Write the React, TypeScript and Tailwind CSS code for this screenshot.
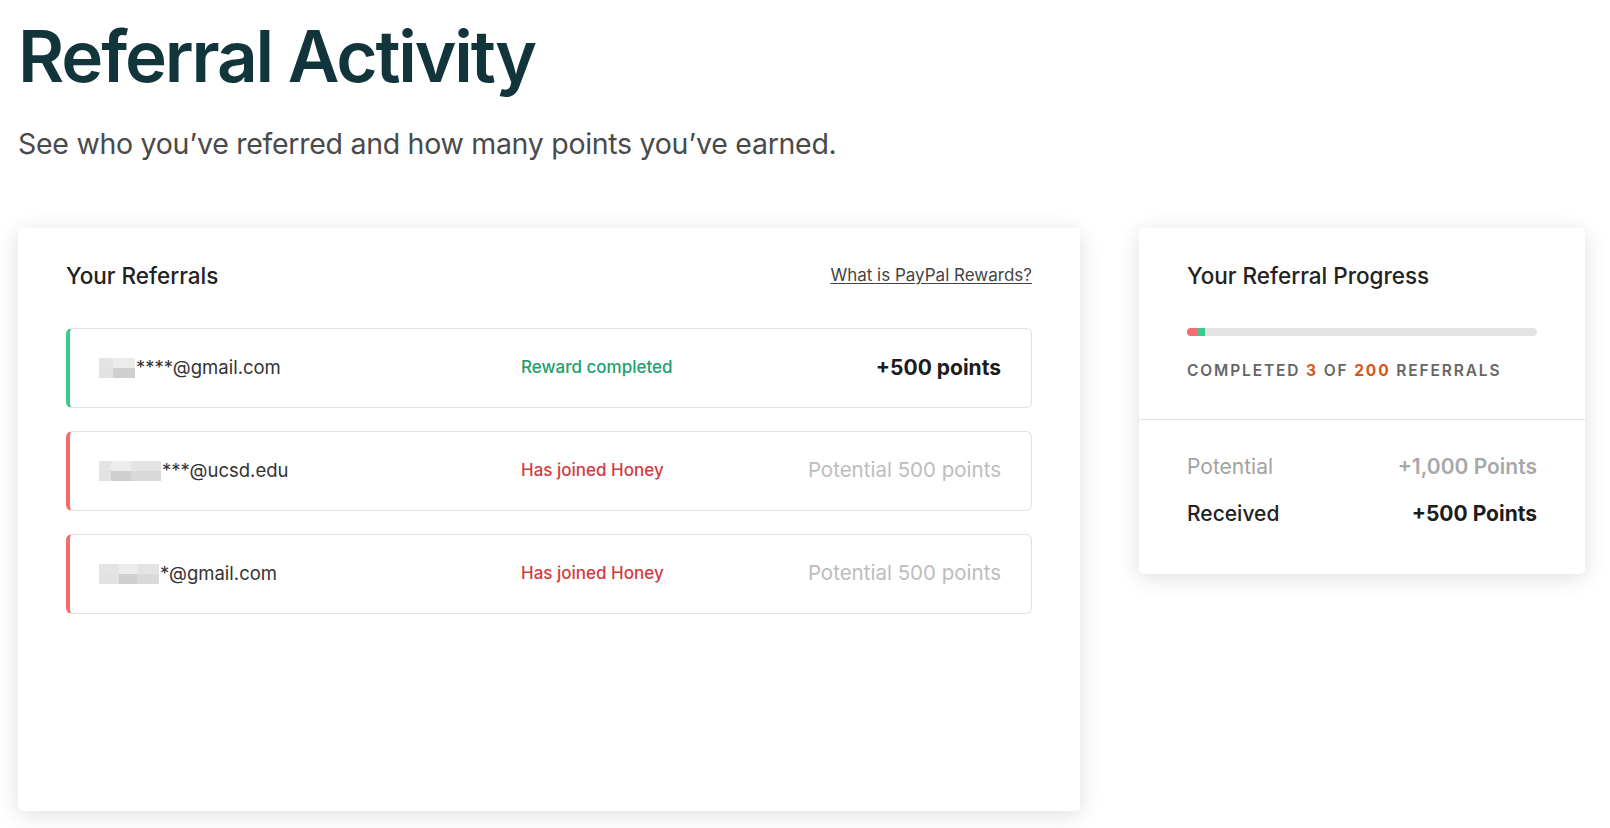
import React from 'react';

type Referral = {
  blur: number[];
  email: string;
  status: 'completed' | 'joined';
};

const referrals: Referral[] = [
  { blur: [14, 22], email: '****@gmail.com', status: 'completed' },
  { blur: [12, 20, 30], email: '***@ucsd.edu', status: 'joined' },
  { blur: [20, 18, 22], email: '*@gmail.com', status: 'joined' },
];

// pixelated stand-in for the censored part of the address
function Blur({ widths }: { widths: number[] }) {
  const shades = ['bg-[#e2e2e2]', 'bg-[#cfcfcf]', 'bg-[#d9d9d9]'];
  return (
    <span className="inline-flex flex-col h-[20px] mr-[1px]">
      <span className="flex h-[10px]">
        {widths.map((w, i) => (
          <span key={i} style={{ width: w }} className={i % 2 ? 'bg-[#ececec]' : 'bg-[#e4e4e4]'} />
        ))}
      </span>
      <span className="flex h-[10px]">
        {widths.map((w, i) => (
          <span key={i} style={{ width: w }} className={shades[i % 3]} />
        ))}
      </span>
    </span>
  );
}

function ReferralRow({ r }: { r: Referral }) {
  const done = r.status === 'completed';
  return (
    <div
      className={`flex items-center h-[80px] rounded-[6px] border border-[#e1e1e1] border-l-4 pl-[29px] pr-[30px] ${
        done ? 'border-l-[#3cc98d]' : 'border-l-[#f26d6d]'
      }`}
    >
      <div className="w-[422px] flex items-center text-[18.5px] text-[#333]">
        <Blur widths={r.blur} />
        <span>{r.email}</span>
      </div>
      <div className={`flex-1 text-[17px] font-medium ${done ? 'text-[#22a06b]' : 'text-[#d43b3f]'}`}>
        {done ? 'Reward completed' : 'Has joined Honey'}
      </div>
      {done ? (
        <div className="text-[21px] font-bold text-[#1c1c1c]">+500 points</div>
      ) : (
        <div className="text-[20.5px] text-[#bdbdbd]">Potential 500 points</div>
      )}
    </div>
  );
}

export default function App() {
  return (
    <div className="min-h-screen bg-white px-[18px] pt-[21px] font-['Inter',sans-serif]">
      <h1 className="text-[71px] font-semibold leading-[1] tracking-[-0.03em] text-[#12343b]">
        Referral Activity
      </h1>
      <p className="mt-[31px] text-[28.5px] text-[#4a4a4a] tracking-[-0.01em]">
        See who you’ve referred and how many points you’ve earned.
      </p>

      <div className="mt-[62px] flex items-start gap-[59px]">
        <div className="w-[1062px] h-[583px] rounded-[5px] bg-white px-12 pt-[34px] shadow-[0_4px_22px_rgba(0,0,0,0.13)]">
          <div className="flex items-center justify-between h-[28px] mb-[38px]">
            <h2 className="text-[22.5px] font-medium text-[#222]">Your Referrals</h2>
            <a href="#" className="text-[17px] text-[#444] underline underline-offset-2">
              What is PayPal Rewards?
            </a>
          </div>
          <div className="flex flex-col gap-[23px]">
            {referrals.map((r, i) => (
              <ReferralRow key={i} r={r} />
            ))}
          </div>
        </div>

        <div className="w-[446px] rounded-[5px] bg-white shadow-[0_4px_22px_rgba(0,0,0,0.13)]">
          <div className="px-12 pt-[34px] pb-[37px]">
            <h2 className="text-[22.5px] leading-[28px] font-medium text-[#222]">Your Referral Progress</h2>
            <div className="mt-[38px] h-[8px] rounded-full bg-[#e3e3e3] flex overflow-hidden">
              <div className="w-[10px] bg-[#f26d6d]" />
              <div className="w-[8px] bg-[#3cc98d]" />
            </div>
            <div className="mt-[23px] text-[15.5px] font-semibold tracking-[0.12em] text-[#666]">
              COMPLETED <span className="text-[#d4541a] font-bold">3</span> OF{' '}
              <span className="text-[#d4541a] font-bold">200</span> REFERRALS
            </div>
          </div>
          <div className="border-t border-[#e3e3e3] px-12 pt-[34px] pb-[47px] flex flex-col gap-[21px]">
            <div className="flex justify-between text-[21px] leading-[26px]">
              <span className="text-[#a3a3a3]">Potential</span>
              <span className="font-semibold text-[#a8a8a8]">+1,000 Points</span>
            </div>
            <div className="flex justify-between text-[21px] leading-[26px]">
              <span className="font-medium text-[#222]">Received</span>
              <span className="font-bold text-[#1c1c1c]">+500 Points</span>
            </div>
          </div>
        </div>
      </div>
    </div>
  );
}
